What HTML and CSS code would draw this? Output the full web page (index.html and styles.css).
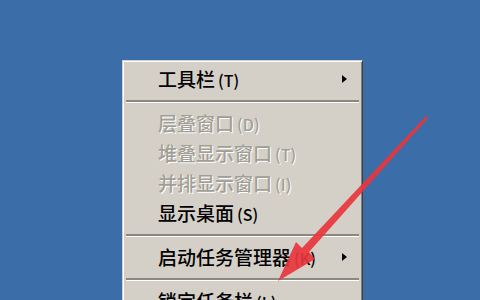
FILE: index.html
```html
<!DOCTYPE html>
<html lang="zh">
<head>
    <meta charset="UTF-8">
    <title>任务栏菜单</title>
    <link rel="stylesheet" href="styles.css">
</head>
<body>
  <div class="desktop">
    <!-- 右键菜单 -->
    <ul class="menu">
      <li class="item has-sub">工具栏<span class="key">(T)</span></li>
      <li class="sep"></li>
      <li class="item disabled">层叠窗口<span class="key">(D)</span></li>
      <li class="item disabled">堆叠显示窗口<span class="key">(T)</span></li>
      <li class="item disabled">并排显示窗口<span class="key">(I)</span></li>
      <li class="item">显示桌面<span class="key">(S)</span></li>
      <li class="sep"></li>
      <li class="item has-sub">启动任务管理器<span class="key">(K)</span></li>
      <li class="sep"></li>
      <li class="item">锁定任务栏<span class="key">(L)</span></li>
    </ul>

    <!-- 红色箭头 -->
    <svg class="pointer" width="480" height="300" viewBox="0 0 480 300">
      <polygon points="428,118 309,252 315,259 278,281 296,242 302,248 426,116" />
    </svg>
  </div>
</body>
</html>
```

FILE: styles.css
```css
/* 桌面 */
body {
    margin: 0;
    padding: 0;
    background: #3b6ea8;
    font-family: "Noto Sans CJK SC", "Liberation Sans", sans-serif;
}

.desktop {
    position: relative;
    width: 480px;
    height: 300px;
    overflow: hidden;
}

/* 菜单 */
.menu {
    list-style: none;
    box-sizing: border-box;
    width: 241px;
    margin: 60px 0 0 122px;
    padding: 3px 2px;
    background: #d4d0c8;
    border: 1px solid;
    border-color: #d4d0c8 #404040 #404040 #d4d0c8;
    box-shadow: inset 1px 1px #ffffff, inset -1px -1px #808080;
}

.item {
    position: relative;
    height: 30px;
    line-height: 30px;
    padding-left: 33px;
    font-size: 19px;
    font-weight: 500;
    color: #000;
    white-space: nowrap;
}

.key {
    margin-left: 3px;
    font-size: 16px;
}

.disabled {
    color: #a29e96;
    text-shadow: 1px 1px 0 #ffffff;
}

/* 子菜单三角 */
.has-sub::after {
    content: "";
    position: absolute;
    right: 13px;
    top: 11px;
    border-left: 5px solid #000;
    border-top: 4px solid transparent;
    border-bottom: 4px solid transparent;
}

/* 分隔线 */
.sep {
    height: 14px;
    display: flex;
    align-items: center;
}

.sep::before {
    content: "";
    flex: 1;
    margin: 0 1px;
    border-top: 2px solid #8c8880;
    border-bottom: 1px solid #ffffff;
}

/* 箭头 */
.pointer {
    position: absolute;
    left: 0;
    top: 0;
}

.pointer polygon {
    fill: #e8353c;
    opacity: 0.92;
}
```
